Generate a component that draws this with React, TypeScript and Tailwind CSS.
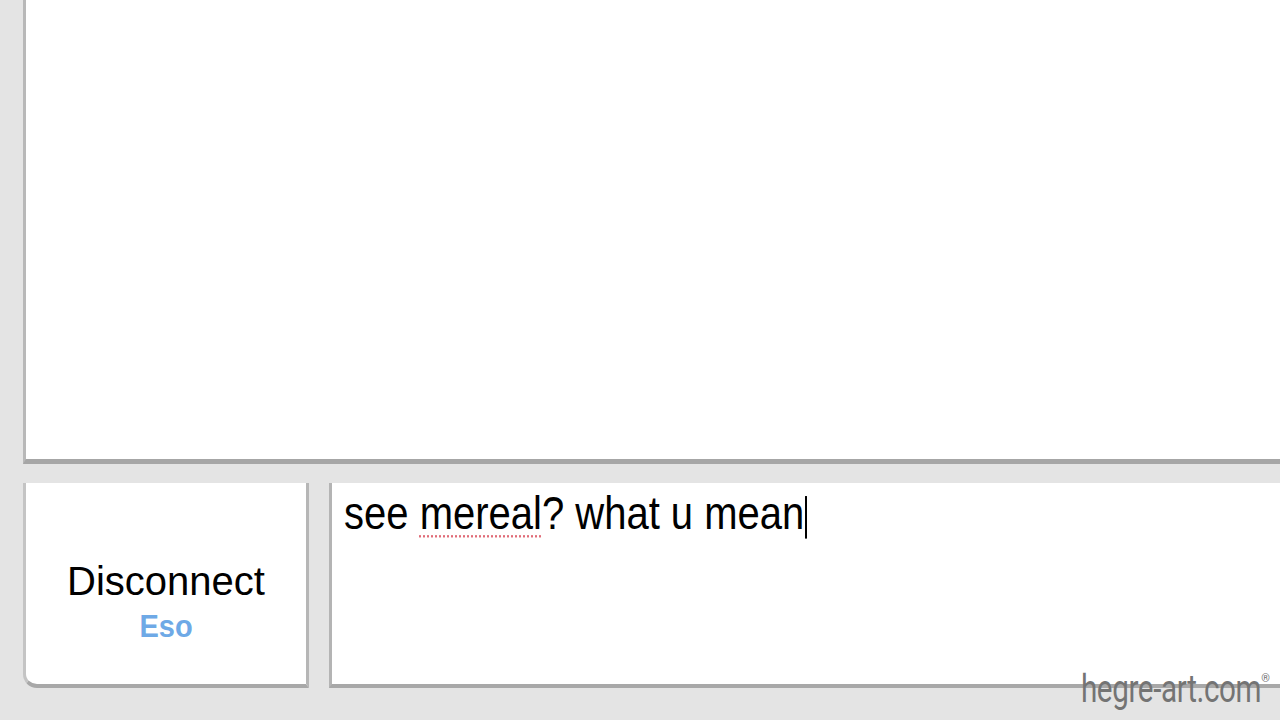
export default function App() {
  return (
    <main className="relative w-[1280px] h-[720px] overflow-hidden bg-[#e4e4e4] font-['Liberation_Sans',Arial,sans-serif]">
      {/* Conversation log */}
      <div className="ml-[23px] h-[464px] bg-white border-l-[3px] border-b-[5px] border-l-[#b8b8b8] border-b-[#a6a6a6]" />

      {/* Bottom controls */}
      <div className="flex gap-[20px] pl-[23px] mt-[19px] h-[205px]">
        <div className="w-[286px] shrink-0 flex flex-col items-center pt-[78px] bg-white border-l-[3px] border-r-[3px] border-b-[4px] border-l-[#c4c4c4] border-r-[#b6b6b6] border-b-[#a8a8a8] rounded-bl-[14px]">
          <div className="text-[40px] leading-[40px] text-black">Disconnect</div>
          <div className="mt-[10px] origin-top scale-y-[1.1] text-[29px] leading-[29px] font-bold text-[#6ea9e6]">Eso</div>
        </div>
        <div className="flex-1 bg-white border-l-[3px] border-b-[4px] border-l-[#b4b4b4] border-b-[#a8a8a8] pl-[12px] pt-[5px]">
          <div className="origin-top-left scale-y-[1.15] text-[40px] leading-[44px] text-black whitespace-nowrap">
            see{' '}
            <span className="underline decoration-dotted decoration-[#e06c78] decoration-2 underline-offset-[5px]">mereal</span>
            ? what u mean
            <span className="inline-block w-[2px] h-[37px] bg-black align-[-8px] ml-[1px]" />
          </div>
        </div>
      </div>

      {/* Watermark */}
      <div className="absolute right-[10px] bottom-[14px] flex items-start text-[#747474]">
        <span className="inline-block origin-right scale-x-[0.76] font-['Roboto'] text-[39px] leading-[34px] tracking-[-0.5px]">
          hegre-art.com
        </span>
        <span className="font-['Roboto'] text-[11px] leading-none mt-[1px]">®</span>
      </div>
    </main>
  );
}
